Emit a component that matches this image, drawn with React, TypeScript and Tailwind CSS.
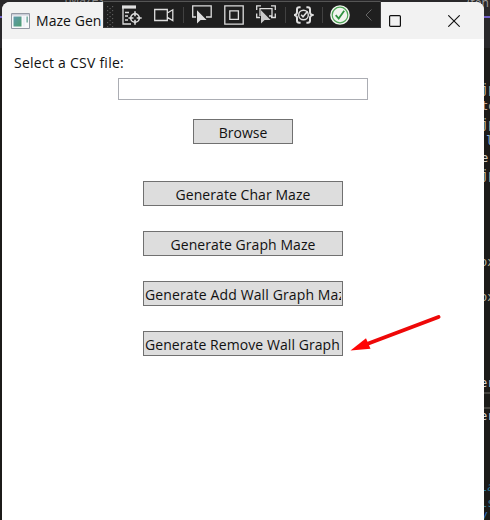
import type { ReactNode } from "react";

type CodeBit = { text: string; top: number; left: number; tone: string };

const codeBits: CodeBit[] = [
  { text: "jp", top: 82, left: 481, tone: "text-[#c9bfa4]" },
  { text: "to", top: 99, left: 481, tone: "text-[#c9a48c]" },
  { text: "jp", top: 117, left: 481, tone: "text-[#c9bfa4]" },
  { text: "l", top: 134, left: 486, tone: "text-[#8fb4dc]" },
  { text: "e", top: 151, left: 481, tone: "text-[#d8d0c0]" },
  { text: "jp", top: 168, left: 481, tone: "text-[#c9bfa4]" },
  { text: "ox", top: 255, left: 480, tone: "text-[#b9b49c]" },
  { text: "ox", top: 290, left: 480, tone: "text-[#b9b49c]" },
  { text: "er", top: 376, left: 480, tone: "text-[#d8d4d0]" },
  { text: "er", top: 409, left: 480, tone: "text-[#d8d4d0]" },
  { text: "La", top: 480, left: 480, tone: "text-[#2f7fa0] italic" },
  { text: "ls", top: 496, left: 480, tone: "text-[#3b7d96]" },
  { text: "/.", top: 510, left: 481, tone: "text-[#2c6fc0]" },
];

function EditorBehind() {
  return (
    <div className="absolute inset-0 overflow-hidden bg-[#1c1b19] font-['DejaVu_Sans_Mono',monospace] text-[12px] leading-[14px]">
      <div className="absolute inset-x-0 top-0 h-12 bg-[#29282a]" />
      <div className="absolute top-4 left-0 h-[2px] w-full bg-[#7160c8]" />
      <div className="absolute top-[-7px] left-[65px] font-['Open_Sans',sans-serif] text-[#8c8c8c]">(Mazes</div>
      <div className="absolute top-[-4px] left-[467px] font-['Open_Sans',sans-serif] text-[#a0a0a0]">(ten</div>
      {codeBits.map((b) => (
        <div key={b.top} className={`absolute whitespace-nowrap ${b.tone}`} style={{ top: b.top, left: b.left }}>
          {b.text}
        </div>
      ))}
      <div className="absolute top-[392px] right-0 h-[2px] w-2 bg-[#45433f]" />
      <div className="absolute top-[407px] right-0 h-[2px] w-2 bg-[#45433f]" />
    </div>
  );
}

function Icon({ children, className = "" }: { children: ReactNode; className?: string }) {
  return (
    <svg viewBox="0 0 20 20" fill="none" stroke="#dedede" strokeWidth="1.3" className={`size-5 shrink-0 ${className}`}>
      {children}
    </svg>
  );
}

const cursor = "M5 5.2v13.3l3.6-3.6h6z";

function DebugToolbar() {
  return (
    <div className="absolute top-[-1px] left-[101px] flex h-[27px] w-[278px] items-start border border-[#39393a] border-t-[#555] bg-[#1f1f1f] pt-[3px]">
      <svg viewBox="0 0 8 22" className="mt-px ml-[3px] h-[22px] w-2 shrink-0" fill="#5c5c5c">
        {[0, 4, 8, 12, 16, 20].map((y) => (
          <g key={y}>
            <rect x="0" y={y} width="1.2" height="1.2" />
            <rect x="5" y={y} width="1.2" height="1.2" />
            <rect x="2.5" y={y + 2} width="1.2" height="1.2" />
          </g>
        ))}
      </svg>
      <Icon className="ml-[7px]">
        <path d="M0 2h14" strokeWidth="3.2" />
        <path d="M1 3v16h8M3 7.5h4M3 11h3M3 15h3" />
        <circle cx="13" cy="13" r="4.3" strokeWidth="1.6" />
        <path d="M13 6.3v5M13 14.7v5M6.5 13h5M14.7 13h5" strokeWidth="1.6" />
      </Icon>
      <Icon className="ml-3">
        <path d="M.7 4.5h12.6v11H.7zM13.3 8l5.5-3.2v10.8l-5.5-3.2" />
      </Icon>
      <div className="mt-[2px] ml-[9px] h-4 w-px bg-[#414141]" />
      <Icon className="ml-[8px]">
        <path d="M4 12H.7V.9h18.5V12H14" />
        <path d={cursor} fill="#dedede" stroke="none" />
      </Icon>
      <Icon className="ml-3">
        <path d="M.8.8h18.4v18.4H.8zM5.8 5.8h8.6v8.6H5.8z" />
      </Icon>
      <Icon className="ml-3">
        <path d="M.7 5V.9H5M15 .9h4.3V5M.7 8.5v4H4M15 12.5h4.3v-4M4 11V3.7h12V11h-3" />
        <path d={cursor} fill="#c9c9c9" stroke="none" />
      </Icon>
      <div className="mt-[2px] ml-[9px] h-4 w-px bg-[#414141]" />
      <Icon className="ml-[8px]">
        <path
          d="M6.6 2.3H5.2Q3 2.3 3 4.3v2.9Q3 9.3.6 10 3 10.7 3 12.8v2.9q0 2 2.2 2h1.4M12.4 2.3h1.4q2.2 0 2.2 2v2.9q0 2.1 2.4 2.8-2.4.7-2.4 2.8v2.9q0 2-2.2 2h-1.4"
          strokeWidth="2"
        />
        <circle cx="9.5" cy="10" r="4.8" strokeWidth="1.4" />
        <path d="m7.2 9.8 1.8 1.9 4.6-5.5" strokeWidth="1.6" />
      </Icon>
      <div className="mt-[2px] ml-[8px] h-4 w-px bg-[#414141]" />
      <Icon className="ml-[7px]">
        <circle cx="10" cy="10" r="9.8" fill="#f1f5ef" stroke="none" />
        <circle cx="10" cy="10" r="7.8" stroke="#4ea657" strokeWidth="1.2" />
        <path d="m5.7 10.2 3 3.4 5.5-7.8" stroke="#2f9140" strokeWidth="1.8" />
      </Icon>
      <svg viewBox="0 0 7 12" fill="none" stroke="#666" className="mt-1 ml-[15px] h-3 w-[7px] shrink-0">
        <path d="M6.5.5 1 6l5.5 5.5" />
      </svg>
    </div>
  );
}

function TitleBar() {
  return (
    <div className="flex h-[37px] shrink-0 items-center bg-[#f2f2f2] pl-[9px]">
      <svg viewBox="0 0 19 16" className="h-4 w-[19px] shrink-0">
        <defs>
          <linearGradient id="pane" x1="0" y1="0" x2="1" y2="1">
            <stop stopColor="#6099ad" />
            <stop offset="1" stopColor="#4e9f72" />
          </linearGradient>
        </defs>
        <path d="M.5.5h18v15H.5z" fill="#f8f9fb" stroke="#9499a4" />
        <path d="M1 1h17v1.5H1z" fill="#c9cdd7" />
        <path d="M2.5 3.5h8v10h-8z" fill="url(#pane)" />
        <path d="M12 3.5h2v10h-2z" fill="#edf0f7" />
        <path d="M15.5 3.5h1.3v6h-1.3z" fill="#62a295" />
      </svg>
      <span className="ml-[6px] w-[70px] overflow-hidden text-[14px] leading-5 tracking-[0.05px] whitespace-nowrap">
        Maze Gen
      </span>
      <svg viewBox="0 0 12 12" fill="none" stroke="#111" strokeWidth="1.2" className="ml-[283px] size-3 shrink-0">
        <rect x=".6" y=".6" width="10.8" height="10.8" rx="1" />
      </svg>
      <svg viewBox="0 0 12 12" fill="none" stroke="#111" strokeWidth="1.1" className="ml-[47px] size-3 shrink-0">
        <path d="m.3.3 11.4 11.4M11.7.3.3 11.7" />
      </svg>
    </div>
  );
}

function PushButton({ children, className = "" }: { children: ReactNode; className?: string }) {
  return (
    <button
      className={`flex h-[25px] shrink-0 overflow-hidden border border-[#707070] bg-[#dddddd] px-px text-[14px] leading-[25px] whitespace-nowrap ${className}`}
    >
      <span className="block w-full overflow-hidden">{children}</span>
    </button>
  );
}

export default function App() {
  return (
    <div className="relative h-[520px] w-[490px] overflow-hidden font-['Open_Sans','Noto_Sans',sans-serif] text-[#111]">
      <EditorBehind />
      <div className="absolute top-[2px] left-[2px] h-[518px] w-[482px]">
        <div className="flex h-full flex-col overflow-hidden rounded-t-lg bg-white">
          <TitleBar />
          <label className="mt-[14px] ml-[12px] h-5 text-[14px] leading-5 tracking-[0.25px] whitespace-nowrap">
            Select a CSV file:
          </label>
          <div className="mt-[5px] flex flex-col items-center">
            <input className="h-[22px] w-[250px] border border-[#abadb3] bg-white px-1 text-sm outline-none" />
            <PushButton className="mt-[19px] w-[100px]">Browse</PushButton>
            <div className="mt-[37px] flex flex-col gap-[25px]">
              <PushButton className="w-[200px] tracking-[0.06px]">Generate Char Maze</PushButton>
              <PushButton className="w-[200px] tracking-[0.06px]">Generate Graph Maze</PushButton>
              <PushButton className="w-[200px] text-left tracking-[0.12px]">Generate Add Wall Graph Maze</PushButton>
              <PushButton className="w-[200px] text-left tracking-[0.07px]">Generate Remove Wall Graph</PushButton>
            </div>
          </div>
        </div>
        <DebugToolbar />
        <svg viewBox="0 0 94 40" className="absolute top-[311px] left-[347px] h-10 w-[94px]">
          <path d="M89.5 4 18 31" stroke="#ee0808" strokeWidth="4" strokeLinecap="round" />
          <path d="M1.5 37.5 17 25.2l4.5 10.6z" fill="#ff0505" />
        </svg>
      </div>
    </div>
  );
}
